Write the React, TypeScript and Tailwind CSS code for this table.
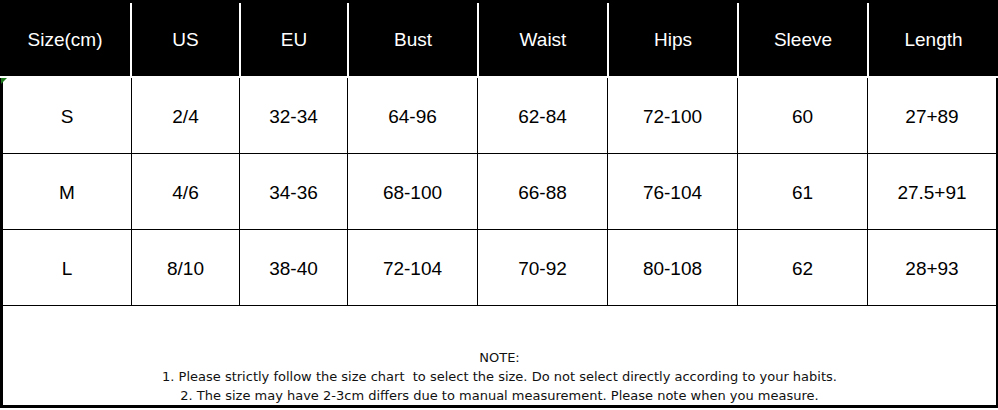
const HEADERS = ['Size(cm)', 'US', 'EU', 'Bust', 'Waist', 'Hips', 'Sleeve', 'Length']

const ROWS = [
  ['S', '2/4', '32-34', '64-96', '62-84', '72-100', '60', '27+89'],
  ['M', '4/6', '34-36', '68-100', '66-88', '76-104', '61', '27.5+91'],
  ['L', '8/10', '38-40', '72-104', '70-92', '80-108', '62', '28+93'],
]

// header widths include the 2px white divider on columns 2..8
const HEAD_W = ['w-[130px]', 'w-[109px]', 'w-[108px]', 'w-[130px]', 'w-[130px]', 'w-[130px]', 'w-[130px]', 'w-[131px]']
// body widths include the 1px black divider on columns 2..8
const BODY_W = ['w-[128px]', 'w-[108px]', 'w-[108px]', 'w-[130px]', 'w-[130px]', 'w-[130px]', 'w-[130px]', 'w-[129px]']

export default function App() {
  return (
    <div className="w-[998px] h-[410px] bg-white font-['Liberation_Sans',Arial,sans-serif] overflow-hidden">
      {/* Header */}
      <div className="flex h-[76px] bg-black text-white text-[19px] border-t-[3px] border-black">
        {HEADERS.map((h, i) => (
          <div
            key={h}
            className={`${HEAD_W[i]} flex items-center justify-center pt-[1px] ${i > 0 ? 'border-l-2 border-white' : ''}`}
          >
            {h}
          </div>
        ))}
      </div>

      {/* Body */}
      <div className="relative mt-[2px] border-l-[3px] border-r-2 border-b-[3px] border-black text-black text-[19px]">
        <svg className="absolute -left-[2px] top-0" width="6" height="6" viewBox="0 0 6 6">
          <path d="M0 0H6L0 6Z" fill="#1f7a1f" />
        </svg>
        {ROWS.map((row, r) => (
          <div key={r} className="flex h-[76px] border-b border-black">
            {row.map((c, i) => (
              <div
                key={i}
                className={`${BODY_W[i]} flex items-center justify-center pt-[3px] ${i > 0 ? 'border-l border-black' : ''}`}
              >
                {c}
              </div>
            ))}
          </div>
        ))}

        {/* Note */}
        <div className="h-[99px] flex flex-col justify-end items-center text-[13px] leading-[19px] text-[#111] whitespace-pre font-['DejaVu_Sans',Tahoma,sans-serif]">
          <p>NOTE:</p>
          <p>1. Please strictly follow the size chart  to select the size. Do not select directly according to your habits.</p>
          <p>2. The size may have 2-3cm differs due to manual measurement. Please note when you measure.</p>
        </div>
      </div>
    </div>
  )
}
